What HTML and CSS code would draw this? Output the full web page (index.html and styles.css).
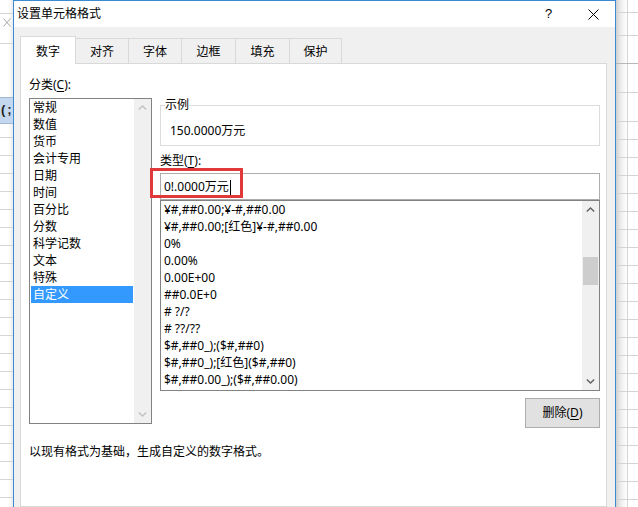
FILE: index.html
```html
<!DOCTYPE html>
<html lang="zh-CN">
<head>
<meta charset="utf-8">
<title>设置单元格格式</title>
<link rel="stylesheet" href="styles.css">
</head>
<body>
<div class="screen">
  <div class="sheet-left">
    <div class="lrow r1"></div>
    <div class="lrow r2"><svg class="ghost-x" width="8" height="9" viewBox="0 0 8 9"><path d="M0.5 0.5 L7.5 8.5 M7.5 0.5 L0.5 8.5" stroke="#a8a8a8" stroke-width="1" fill="none"/></svg></div>
    <div class="lrow r3"></div>
    <div class="sel-cell">(;</div>
    <div class="lrest"></div>
  </div>

  <div class="dialog">
    <div class="titlebar">
      <span class="title">设置单元格格式</span>
      <span class="help">?</span>
      <span class="close"><svg width="11" height="11" viewBox="0 0 11 11"><path d="M0.5 0.5 L10.5 10.5 M10.5 0.5 L0.5 10.5" stroke="#000" stroke-width="1" fill="none"/></svg></span>
    </div>
    <div class="body">
      <div class="tabs">
        <div class="tab active w0">数字</div>
        <div class="tab w1">对齐</div>
        <div class="tab w1">字体</div>
        <div class="tab w2">边框</div>
        <div class="tab w2">填充</div>
        <div class="tab w3">保护</div>
      </div>
      <div class="panel">
        <div class="cols">
          <div class="col-left">
            <div class="label">分类(<u>C</u>):</div>
            <div class="listbox cat">
              <ul class="items">
                <li>常规</li>
                <li>数值</li>
                <li>货币</li>
                <li>会计专用</li>
                <li>日期</li>
                <li>时间</li>
                <li>百分比</li>
                <li>分数</li>
                <li>科学记数</li>
                <li>文本</li>
                <li>特殊</li>
                <li class="selected">自定义</li>
              </ul>
              <div class="vscroll disabled">
                <div class="sbtn"><svg width="9" height="5" viewBox="0 0 9 5"><path d="M0.8 4.5 L4.5 1 L8.2 4.5" stroke="#c2c2c2" stroke-width="1.4" fill="none"/></svg></div>
                <div class="track"></div>
                <div class="sbtn"><svg width="9" height="5" viewBox="0 0 9 5"><path d="M0.8 0.5 L4.5 4 L8.2 0.5" stroke="#c2c2c2" stroke-width="1.4" fill="none"/></svg></div>
              </div>
            </div>
          </div>
          <div class="col-right">
            <fieldset class="sample">
              <legend>示例</legend>
              <div class="sample-val">150.0000万元</div>
            </fieldset>
            <div class="label type-label">类型(<u>T</u>):</div>
            <div class="type-input">0!.0000万元<span class="caret"></span><div class="highlight"></div></div>
            <div class="listbox fmt">
              <ul class="items">
                <li>¥#,##0.00;¥-#,##0.00</li>
                <li>¥#,##0.00;[红色]¥-#,##0.00</li>
                <li>0%</li>
                <li>0.00%</li>
                <li>0.00E+00</li>
                <li>##0.0E+0</li>
                <li># ?/?</li>
                <li># ??/??</li>
                <li>$#,##0_);($#,##0)</li>
                <li>$#,##0_);[红色]($#,##0)</li>
                <li>$#,##0.00_);($#,##0.00)</li>
              </ul>
              <div class="vscroll">
                <div class="sbtn"><svg width="9" height="5" viewBox="0 0 9 5"><path d="M0.8 4.5 L4.5 1 L8.2 4.5" stroke="#606060" stroke-width="1.4" fill="none"/></svg></div>
                <div class="track"><div class="thumb"></div></div>
                <div class="sbtn"><svg width="9" height="5" viewBox="0 0 9 5"><path d="M0.8 0.5 L4.5 4 L8.2 0.5" stroke="#606060" stroke-width="1.4" fill="none"/></svg></div>
              </div>
            </div>
            <div class="btn-row"><button class="btn">删除(<u>D</u>)</button></div>
          </div>
        </div>
        <div class="desc">以现有格式为基础，生成自定义的数字格式。</div>
      </div>
    </div>
  </div>

  <div class="sheet-right">
    <div class="rrow h12"></div>
    <div class="rrow h23"></div>
    <div class="rrow h28 dark"></div>
    <div class="rrow h29"></div>
    <div class="rrow h29"></div>
    <div class="rrest"></div>
  </div>
</div>
</body>
</html>
```
FILE: styles.css
```css
* { box-sizing: border-box; }
html, body { margin: 0; padding: 0; }
body {
  width: 638px;
  height: 507px;
  overflow: hidden;
  background: #fff;
  font-family: "Noto Sans", "Noto Sans CJK SC", sans-serif;
  font-size: 12px;
  line-height: 14px;
  color: #000;
}
.screen { display: flex; height: 507px; overflow: hidden; }

/* spreadsheet strips */
.sheet-left {
  width: 13px;
  flex: none;
  display: flex;
  flex-direction: column;
  background: linear-gradient(to right, #fff 0, #fff 8px, #ececec 13px);
}
.lrow { border-bottom: 1px solid #d6d6d6; flex: none; }
.r1 { height: 14px; }
.r2 { height: 30px; padding: 4px 0 0 3px; }
.ghost-x { display: block; }
.r3 { height: 53px; border-bottom: none; }
.sel-cell {
  height: 27px;
  flex: none;
  background: #c3d8ee;
  border-top: 1px solid #9fb8d3;
  border-bottom: 1px solid #9fb8d3;
  font-family: "Liberation Sans", sans-serif;
  font-size: 13px;
  line-height: 24px;
  font-weight: bold;
  letter-spacing: 2px;
  color: #222;
  padding-left: 1px;
  white-space: nowrap;
}
.lrest {
  flex: 1;
  background:
    repeating-linear-gradient(to bottom, transparent 0, transparent 17px, #d6d6d6 17px, #d6d6d6 18px);
  background-position: 0 -4px;
}

.sheet-right {
  width: 22px;
  flex: none;
  display: flex;
  flex-direction: column;
  background:
    linear-gradient(to right, transparent 0, transparent 11px, #d4d4d4 11px, #d4d4d4 12px, transparent 12px),
    linear-gradient(to right, #cfcfcf 0, #e9e9e9 4px, #f7f7f7 8px, #fff 11px);
}
.rrow { flex: none; border-bottom: 1px solid #d4d4d4; }
.h12 { height: 13px; }
.h23 { height: 23px; }
.h28 { height: 28px; }
.rrow.dark { border-bottom-color: #b8b8b8; }
.h29 { height: 29px; }
.rrest {
  flex: 1;
  background: repeating-linear-gradient(to bottom, transparent 0, transparent 17px, #d4d4d4 17px, #d4d4d4 18px);
}

/* dialog */
.dialog {
  width: 603px;
  flex: none;
  border: 1px solid #3b8bd2;
  border-bottom: none;
  display: flex;
  flex-direction: column;
  background: #f0f0f0;
}
.titlebar {
  height: 26px;
  flex: none;
  background: #fff;
  display: flex;
  align-items: center;
  padding-left: 3px;
}
.title { flex: 1; }
.help { width: 45px; text-align: center; font-family: "Liberation Sans", sans-serif; font-size: 13px; }
.close { width: 44px; display: flex; justify-content: center; align-items: center; }
.close svg { display: block; }

.body {
  flex: 1;
  display: flex;
  flex-direction: column;
  min-height: 0;
  padding: 0 8px 0 6px;
}
.tabs {
  height: 36px;
  flex: none;
  display: flex;
  align-items: flex-end;
}
.tab {
  height: 25px;
  padding-top: 6px;
  text-align: center;
  background: #f0f0f0;
  border-top: 1px solid #d9d9d9;
  border-right: 1px solid #d9d9d9;
}
.tab.active {
  height: 28px;
  margin-bottom: -1px;
  padding-top: 8px;
  background: #fff;
  border-left: 1px solid #d9d9d9;
  position: relative;
  z-index: 1;
}
.w0 { width: 56px; }
.w1 { width: 53px; }
.w2 { width: 54px; }
.w3 { width: 52px; }

.panel {
  flex: 1;
  background: #fff;
  border: 1px solid #d9d9d9;
  padding: 14px 6px 0 8px;
}
.cols {
  display: grid;
  grid-template-columns: 123px 440px;
  column-gap: 8px;
  align-items: start;
}
.label { height: 14px; white-space: nowrap; }
.label u, .btn u { text-decoration-thickness: 1px; text-underline-offset: 2px; }

.listbox { border: 1px solid #828282; display: flex; background: #fff; }
.items { list-style: none; margin: 0; flex: 1; min-width: 0; }
.items li { line-height: 17px; height: 17px; white-space: nowrap; }

.cat { margin-top: 6px; height: 326px; }
.cat .items { padding: 0 1px; }
.cat .items li { padding-left: 2px; }
.cat .items li.selected { background: #3399ff; color: #fff; }

.vscroll {
  width: 17px;
  flex: none;
  background: #f0f0f0;
  display: flex;
  flex-direction: column;
}
.sbtn { height: 17px; flex: none; display: flex; justify-content: center; align-items: center; }
.sbtn svg { display: block; }
.track { flex: 1; padding: 0 1px; }
.thumb { margin-top: 39px; height: 28px; background: #cdcdcd; }

.sample {
  margin: 20px 0 0 0;
  padding: 12px 0 7px 4px;
  border: 1px solid #dcdcdc;
  min-width: 0;
}
.sample legend { padding: 0; line-height: 14px; }
.sample-val { margin-left: 5px; line-height: 14px; }

.type-label { margin-top: 8px; }
.type-input {
  position: relative;
  margin-top: 5px;
  height: 27px;
  border: 1px solid #adadad;
  padding-left: 3px;
  line-height: 25px;
  white-space: nowrap;
}
.caret {
  display: inline-block;
  width: 1px;
  height: 16px;
  background: #000;
  vertical-align: middle;
  margin-left: 1px;
}
.highlight {
  position: absolute;
  left: -11px;
  top: -6px;
  width: 93px;
  height: 30px;
  border: 3px solid #e0393c;
}

.fmt { height: 191px; }
.fmt .items { padding: 0 0 0 3px; }

.btn-row { display: flex; justify-content: flex-end; margin-top: 7px; }
.btn {
  width: 75px;
  height: 30px;
  padding: 0;
  border: 1px solid #adadad;
  background: #e1e1e1;
  font: inherit;
  line-height: 14px;
  color: #000;
}

.desc { margin-top: 17px; line-height: 14px; white-space: nowrap; }
```
